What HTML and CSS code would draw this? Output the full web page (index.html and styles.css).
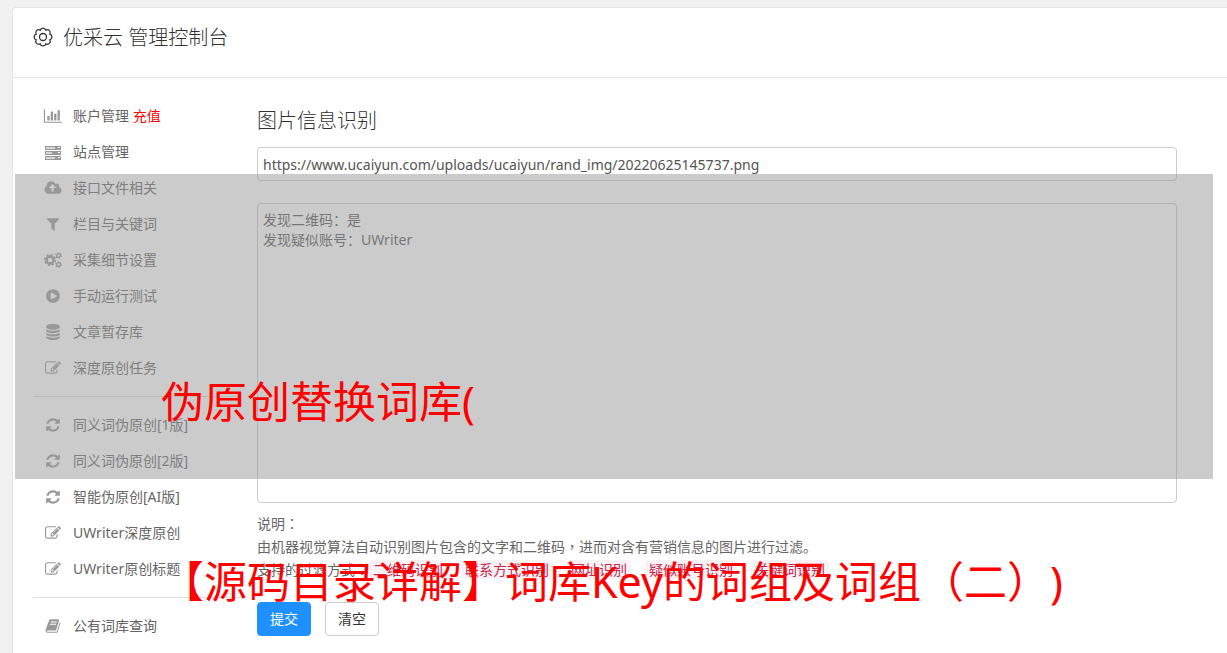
FILE: index.html
```
<!DOCTYPE html>
<html lang="zh-CN">
<head>
<meta charset="utf-8">
<title>优采云 管理控制台</title>
<link rel="stylesheet" href="styles.css">
</head>
<body>
<svg class="sprite" aria-hidden="true">
  <symbol id="chart" viewBox="0 0 2048 1792"><path d="M640 896v512h-256v-512h256zm384-512v1024h-256v-1024h256zm1024 1152v128h-2048v-1536h128v1408h1920zm-640-896v768h-256v-768h256zm384-384v1152h-256v-1152h256z"/></symbol>
  <symbol id="server" viewBox="0 0 18 16"><path fill-rule="evenodd" d="M1 2h16v4H1zM2 3v2h9V3zM14 3v1h2V3zM1 7h16v4H1zM2 8v2h6V8zM14 8v1h2V8zM1 12h16v4H1zM2 13v2h9v-2zM14 13v1h2v-1z"/><path opacity=".4" d="M2 3h9v2H2zM2 8h6v2H2zM2 13h9v2H2z"/></symbol>
  <symbol id="cloud" viewBox="-64 0 1920 1792"><path d="M1216 864q0-14-9-23l-352-352q-9-9-23-9t-23 9l-351 351q-10 12-10 24 0 14 9 23t23 9h224v352q0 13 9.500 22.500t22.500 9.500h192q13 0 22.500-9.500t9.500-22.500v-352h224q13 0 22.500-9.500t9.500-22.500zm640 288q0 159-112.500 271.500t-271.500 112.500h-1088q-185 0-316.500-131.500t-131.500-316.500q0-130 70-240t188-165q-2-30-2-43 0-212 150-362t362-150q156 0 285.500 87t188.500 231q71-62 166-62 106 0 181 75t75 181q0 76-41 138 130 31 213.500 135.500t83.500 238.500z"/></symbol>
  <symbol id="filter" viewBox="0 0 1792 1792"><path d="M1595 295q17 41-14 70l-493 493v742q0 42-39 59-13 5-25 5-27 0-45-19l-256-256q-19-19-19-45v-486l-493-493q-31-29-14-70 17-39 59-39h1280q42 0 59 39z"/></symbol>
  <symbol id="cogs" viewBox="0 0 18 16"><g fill="none" stroke="currentColor"><circle cx="6" cy="8" r="3.500" stroke-width="2.600"/><circle cx="6" cy="8" r="5.200" stroke-width="1.800" stroke-dasharray="2.040 2.040"/><circle cx="14.500" cy="3.500" r="1.900" stroke-width="1.400"/><circle cx="14.500" cy="3.500" r="2.800" stroke-width="1.100" stroke-dasharray="1.460 1.460"/><circle cx="14.500" cy="12.500" r="1.900" stroke-width="1.400"/><circle cx="14.500" cy="12.500" r="2.800" stroke-width="1.100" stroke-dasharray="1.460 1.460"/></g></symbol>
  <symbol id="play" viewBox="0 0 1792 1792"><path d="M896 128q209 0 385.500 103t279.500 279.500 103 385.500-103 385.500-279.500 279.500-385.500 103-385.500-103-279.500-279.500-103-385.500 103-385.500 279.500-279.500 385.500-103zm384 823q32-18 32-55t-32-55l-544-320q-31-19-64-1-32 19-32 56v640q0 37 32 56 16 8 32 8 17 0 32-9z"/></symbol>
  <symbol id="database" viewBox="0 0 1792 1792"><path d="M896 768q237 0 443-43t325-127v170q0 69-103 128t-280 93.500-385 34.500-385-34.500-280-93.500-103-128v-170q119 84 325 127t443 43zm0 768q237 0 443-43t325-127v170q0 69-103 128t-280 93.500-385 34.500-385-34.500-280-93.500-103-128v-170q119 84 325 127t443 43zm0-384q237 0 443-43t325-127v170q0 69-103 128t-280 93.500-385 34.500-385-34.500-280-93.500-103-128v-170q119 84 325 127t443 43zm0-1152q208 0 385 34.500t280 93.500 103 128v128q0 69-103 128t-280 93.500-385 34.500-385-34.500-280-93.500-103-128v-128q0-69 103-128t280-93.500 385-34.500z"/></symbol>
  <symbol id="edit" viewBox="0 0 1792 1792"><path d="M888 1184l116-116-152-152-116 116v56h96v96h56zm440-720q-16-16-33 1l-350 350q-17 17-1 33t33-1l350-350q17-17 1-33zm80 594v190q0 119-84.500 203.500t-203.500 84.500h-832q-119 0-203.500-84.500t-84.500-203.500v-832q0-119 84.500-203.500t203.500-84.500h832q63 0 117 25 15 7 18 23 3 17-9 29l-49 49q-14 14-32 8-23-6-45-6h-832q-66 0-113 47t-47 113v832q0 66 47 113t113 47h832q66 0 113-47t47-113v-126q0-13 9-22l64-64q15-15 35-7t20 29zm-96-738l288 288-672 672h-288v-288zm444 132l-92 92-288-288 92-92q28-28 68-28t68 28l152 152q28 28 28 68t-28 68z"/></symbol>
  <symbol id="refresh" viewBox="0 0 1792 1792"><path d="M1639 1056q0 5-1 7-64 268-268 434.500t-478 166.500q-146 0-282.500-55t-243.500-157l-129 129q-19 19-45 19t-45-19-19-45v-448q0-26 19-45t45-19h448q26 0 45 19t19 45-19 45l-137 137q71 66 161 102t187 36q134 0 250-65t186-179q11-17 53-117 8-23 30-23h192q13 0 22.500 9.500t9.500 22.500zm25-800v448q0 26-19 45t-45 19h-448q-26 0-45-19t-19-45 19-45l138-138q-148-137-349-137-134 0-250 65t-186 179q-11 17-53 117-8 23-30 23h-199q-13 0-22.500-9.500t-9.500-22.500v-7q65-268 270-434.500t480-166.500q146 0 284 55.500t245 156.500l130-129q19-19 45-19t45 19 19 45z"/></symbol>
  <symbol id="book" viewBox="0 0 1792 1792"><path d="M1703 478q40 57 18 129l-275 906q-19 64-76.500 107.500t-122.500 43.500h-923q-77 0-148.500-53.500t-99.500-131.500q-24-67-2-127 0-4 3-27t4-37q1-8-3-21.500t-3-19.500q2-11 8-21t16.500-23.500 16.500-23.500q23-38 45-91.500t30-91.500q3-10 .5-30t-.5-28q3-11 17-28t17-23q21-36 42-92t25-90q1-9-2.500-32t.5-28q4-13 22-30.500t22-22.500q19-26 42.500-84.500t27.500-96.500q1-8-3-25.500t-2-26.500q2-8 9-18t18-23 17-21q8-12 16.500-30.500t15-35 16-36 19.500-32 26.500-23.500 36-11.500 47.500 5.500l-1 3q38-9 51-9h761q74 0 114 56t18 130l-274 906q-36 119-71.500 153.500t-128.500 34.500h-869q-27 0-38 15-11 16-1 43 24 70 144 70h923q29 0 56-15.500t35-41.500l300-987q7-22 5-57 38 15 59 43zm-1064 2q-4 13 2 22.500t20 9.500h608q13 0 25.500-9.500t16.500-22.500l21-64q4-13-2-22.500t-20-9.500h-608q-13 0-25.500 9.500t-16.500 22.500zm-83 256q-4 13 2 22.500t20 9.500h608q13 0 25.500-9.500t16.500-22.500l21-64q4-13-2-22.500t-20-9.500h-608q-13 0-25.500 9.500t-16.500 22.500z"/></symbol>
</svg>
<div class="panel">
  <header class="panel-head">
    <svg class="gear" viewBox="-1 -1 20 20" aria-hidden="true"><path d="M15.800 11.800A2.900 2.900 0 0 1 11.800 15.800A2.900 2.900 0 0 1 6.200 15.800A2.900 2.900 0 0 1 2.200 11.800A2.900 2.900 0 0 1 2.200 6.200A2.900 2.900 0 0 1 6.200 2.200A2.900 2.900 0 0 1 11.800 2.200A2.900 2.900 0 0 1 15.800 6.200A2.900 2.900 0 0 1 15.800 11.800Z"/><circle cx="9" cy="9" r="3.500"/></svg>
    <h1 class="title">优采云 管理控制台</h1>
  </header>
  <div class="panel-body">
    <nav class="side">
      <a class="item" href="#"><svg class="icon"><use href="#chart"/></svg><span>账户管理 <em class="hot">充值</em></span></a>
      <a class="item" href="#"><svg class="icon"><use href="#server"/></svg>站点管理</a>
      <a class="item" href="#"><svg class="icon"><use href="#cloud"/></svg>接口文件相关</a>
      <a class="item" href="#"><svg class="icon"><use href="#filter"/></svg>栏目与关键词</a>
      <a class="item" href="#"><svg class="icon"><use href="#cogs"/></svg>采集细节设置</a>
      <a class="item" href="#"><svg class="icon"><use href="#play"/></svg>手动运行测试</a>
      <a class="item" href="#"><svg class="icon"><use href="#database"/></svg>文章暂存库</a>
      <a class="item" href="#"><svg class="icon"><use href="#edit"/></svg>深度原创任务</a>
      <hr class="rule">
      <a class="item" href="#"><svg class="icon"><use href="#refresh"/></svg>同义词伪原创[1版]</a>
      <a class="item" href="#"><svg class="icon"><use href="#refresh"/></svg>同义词伪原创[2版]</a>
      <a class="item" href="#"><svg class="icon"><use href="#refresh"/></svg>智能伪原创[AI版]</a>
      <a class="item" href="#"><svg class="icon"><use href="#edit"/></svg>UWriter深度原创</a>
      <a class="item" href="#"><svg class="icon"><use href="#edit"/></svg>UWriter原创标题</a>
      <hr class="rule">
      <a class="item" href="#"><svg class="icon"><use href="#book"/></svg>公有词库查询</a>
    </nav>
    <main class="main">
      <h2 class="subtitle">图片信息识别</h2>
      <input class="field" type="text" aria-label="图片地址" value="https://www.ucaiyun.com/uploads/ucaiyun/rand_img/20220625145737.png">
      <textarea class="field result" aria-label="识别结果">发现二维码：是
发现疑似账号：UWriter</textarea>
      <div class="notes">
        <p>说明<span class="mark" lang="zh-TW">：</span></p>
        <p>由机器视觉算法自动识别图片包含的文字和二维码<span class="mark" lang="zh-TW">，</span>进而对含有营销信息的图片进行过滤。</p>
        <p class="modes"><span>支持的过滤方式<span class="mark" lang="zh-TW">：</span></span><span class="tags"><code>二维码识别</code><code>联系方式识别</code><code>网址识别</code><code>疑似账号识别</code><code>关键词识别</code></span></p>
      </div>
      <div class="actions">
        <button class="btn primary" type="button">提交</button>
        <button class="btn" type="button">清空</button>
      </div>
    </main>
  </div>
</div>
<div class="shade"></div>
<div class="caption first">伪原创替换词库(</div>
<div class="caption second">【源码目录详解】词库Key的词组及词组（二）)</div>
</body>
</html>
```
FILE: styles.css
```
* { box-sizing: border-box; }
body {
  position: relative;
  margin: 0;
  padding: 7px 0 0 12px;
  height: 100vh;
  overflow: hidden;
  background: #f1f1f1;
  color: #666;
  font: 14px/20px "Noto Sans", "Noto Sans CJK SC", sans-serif;
  text-spacing-trim: space-all;
}
h1, h2, p { margin: 0; font-weight: 400; }
.sprite { position: absolute; width: 0; height: 0; }
.panel {
  min-height: 100%;
  background: #fff;
  border: 1px solid #e5e5e5;
  border-width: 1px 0 0 1px;
  border-radius: 4px 0 0 0;
}
.panel-head {
  display: flex;
  align-items: center;
  gap: 10px;
  padding: 15px 20px 24px;
  border-bottom: 1px solid #e5e5e5;
  color: #333;
}
.gear {
  width: 20px;
  height: 20px;
  margin-bottom: 3px;
  fill: none;
  stroke: #333;
  stroke-width: 1.3;
}
.title, .subtitle {
  color: #333;
  font-size: 20px;
  font-weight: 300;
  line-height: 30px;
}
.panel-body { display: flex; gap: 14px; padding: 20px 50px 20px 20px; }
.side { width: 210px; flex: none; }
.item {
  display: flex;
  align-items: center;
  gap: 10px;
  height: 36px;
  padding-left: 10px;
  color: #666;
  text-decoration: none;
  white-space: nowrap;
}
.icon { width: 20px; height: 16px; flex: none; fill: currentColor; color: #999; }
.hot { color: #f00; font-style: normal; }
.rule { margin: 10px 0; border: 0; border-top: 1px solid #ddd; }
.main { flex: 1; min-width: 0; padding-top: 8px; }
.subtitle { margin-bottom: 11px; }
.field {
  display: block;
  width: 100%;
  height: 34px;
  padding: 6px 5px;
  border: 1px solid #ccc;
  border-radius: 4px;
  background: #fff;
  color: #555;
  font: inherit;
}
.result { height: 300px; margin-top: 22px; resize: none; }
.notes { margin-top: 9px; line-height: 23px; }
.mark { font-family: "Noto Sans CJK TC", sans-serif; }
.modes { display: flex; align-items: center; }
.tags { display: flex; gap: 14px; }
code {
  padding: 0 4px;
  border-radius: 4px;
  background: #f9f2f4;
  color: #c7254e;
  font: 14px/19px "Noto Sans CJK SC", sans-serif;
}
.actions { display: flex; gap: 14px; margin-top: 21px; }
.btn {
  height: 34px;
  padding: 0 12px;
  border: 1px solid #ccc;
  border-radius: 4px;
  background: #fff;
  color: #333;
  font: inherit;
}
.primary { border-color: #1e90ff; background: #1e90ff; color: #fff; }
.shade {
  position: absolute;
  top: 174px;
  left: 15px;
  right: 14px;
  height: 305px;
  background: rgba(151, 151, 151, .5);
}
.caption {
  position: absolute;
  left: 161px;
  color: #f00;
  font-size: 43px;
  line-height: 60px;
  white-space: nowrap;
}
.first { top: 372px; }
.second { top: 552px; }
```
